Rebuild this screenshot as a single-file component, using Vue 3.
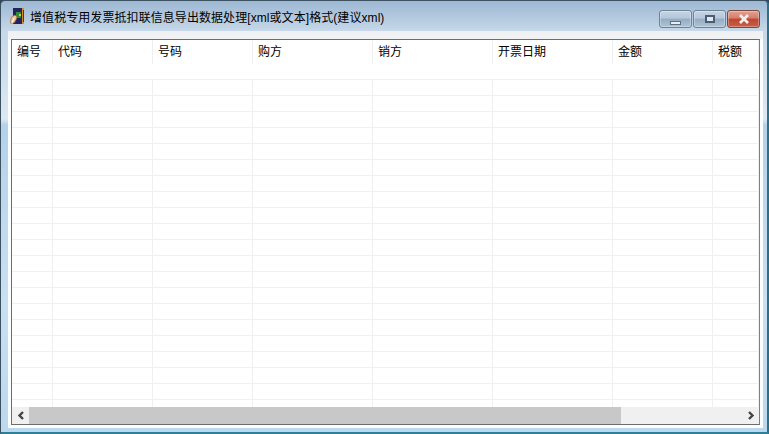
<script setup>
const columns = [
  { label: '编号', width: 41 },
  { label: '代码', width: 100 },
  { label: '号码', width: 100 },
  { label: '购方', width: 120 },
  { label: '销方', width: 120 },
  { label: '开票日期', width: 120 },
  { label: '金额', width: 100 },
  { label: '税额', width: 46 }
]
const rows = Array.from({ length: 21 }, (_, i) => i)
</script>

<template>
  <div class="window">
    <div class="titlebar">
      <svg class="app-icon" width="16" height="16" viewBox="0 0 16 16">
        <rect x="3" y="0" width="9" height="16" fill="#23235f" />
        <rect x="12" y="0" width="2" height="16" fill="#d98a2a" />
        <rect x="13" y="2" width="1" height="12" fill="#7a2418" />
        <rect x="6" y="4" width="5" height="6" fill="#2f8f35" />
        <rect x="9" y="6" width="2" height="2" fill="#d8c840" />
        <path d="M0 15 L1.5 9 L5 7 L7 9 L6 12 L4 15 Z" fill="#f0c898" stroke="#a86a3a" stroke-width="0.7" />
        <path d="M2 15 L4 10" stroke="#fff" stroke-width="1" fill="none" />
      </svg>
      <span class="title">增值税专用发票抵扣联信息导出数据处理[xml或文本]格式(建议xml)</span>
      <div class="controls">
        <button class="ctl"><span class="min-glyph"></span></button>
        <button class="ctl"><span class="max-glyph"></span></button>
        <button class="ctl close">
          <svg width="12" height="10" viewBox="0 0 12 10">
            <path d="M2 1 L10 9 M10 1 L2 9" stroke="#f4f0ee" stroke-width="2.6" fill="none" />
          </svg>
        </button>
      </div>
    </div>
    <div class="client">
      <div class="list">
        <div class="table">
          <div class="header">
            <div v-for="c in columns" :key="c.label" class="head-cell" :style="{ width: c.width + 'px' }">{{ c.label }}</div>
          </div>
          <div class="body">
            <div v-for="r in rows" :key="r" class="row">
              <div v-for="c in columns" :key="c.label" class="cell" :style="{ width: c.width + 'px' }"></div>
            </div>
          </div>
        </div>
        <div class="scrollbar">
          <div class="arrow">
            <svg width="8" height="9" viewBox="0 0 8 9"><path d="M6 1 L2.5 4.5 L6 8" stroke="#444" stroke-width="2.4" fill="none" /></svg>
          </div>
          <div class="track"><div class="thumb"></div></div>
          <div class="arrow">
            <svg width="8" height="9" viewBox="0 0 8 9"><path d="M2 1 L5.5 4.5 L2 8" stroke="#444" stroke-width="2.4" fill="none" /></svg>
          </div>
        </div>
      </div>
    </div>
  </div>
</template>

<style>
html, body { margin: 0; padding: 0; overflow: hidden; background: #2c4a5c; }
</style>

<style scoped>
.window {
  width: 769px;
  height: 434px;
  box-sizing: border-box;
  display: flex;
  flex-direction: column;
  padding: 0 4px 4px 7px;
  background: linear-gradient(#9db7d3 0, #c6d8e9 30px, #dce8f3 118px, #b4d1ea 124px, #c9e0f2 300px, #bcd8ee 100%);
  border: 1px solid #3d5260;
  border-right: 2px solid #2f6f86;
  border-bottom: 2px solid #2f7f96;
  border-radius: 5px 5px 0 0;
  font-family: "Liberation Sans", "Noto Sans CJK SC", sans-serif;
  color: #000;
}
.titlebar {
  height: 30px;
  flex: none;
  display: flex;
  align-items: center;
  padding-left: 3px;
  padding-right: 3px;
}
.app-icon { flex: none; margin-left: -1px; }
.title {
  margin-left: 4px;
  font-size: 12px;
  letter-spacing: .07px;
  color: #000;
  white-space: nowrap;
}
.controls {
  margin-left: auto;
  display: flex;
  align-self: flex-start;
  gap: 1px;
  padding-top: 9px;
}
.ctl {
  width: 33px;
  height: 18px;
  padding: 0;
  box-sizing: border-box;
  border: 1px solid #6f8397;
  border-radius: 3px;
  background: linear-gradient(#c6d5e4 0, #b4c6d9 45%, #94acc4 50%, #aec3d7 100%);
  display: flex;
  align-items: center;
  justify-content: center;
  box-shadow: inset 0 0 0 1px rgba(255, 255, 255, .3);
}
.ctl.close {
  background: linear-gradient(#e0a294 0, #d67c6a 45%, #bd4630 50%, #c95f48 100%);
  border-color: #7a4a40;
}
.min-glyph {
  box-sizing: border-box;
  width: 11px;
  height: 4px;
  margin-top: 7px;
  background: #e8eef4;
  border: 1px solid #5c6f83;
}
.max-glyph {
  box-sizing: border-box;
  width: 10px;
  height: 8px;
  background: #dfe8f0;
  border: 2px solid #4c5d70;
}
.client {
  flex: 1;
  min-height: 0;
  box-sizing: border-box;
  padding: 8px 3px 3px 3px;
  background: linear-gradient(#eef0f2, #f2f3f4 8px, #fbfdff 9px);
  display: flex;
}
.list {
  flex: 1;
  min-width: 0;
  box-sizing: border-box;
  border: 1px solid #6d6d6d;
  border-right-color: #808080;
  background: #fff;
  display: flex;
  flex-direction: column;
}
.table {
  flex: 1;
  min-height: 0;
  overflow: hidden;
}
.header {
  height: 39px;
  display: flex;
}
.head-cell {
  flex: none;
  box-sizing: border-box;
  height: 24px;
  padding: 4px 0 0 5px;
  border-right: 1px solid #eeeeee;
  font-size: 12px;
  line-height: 16px;
  color: #000;
  white-space: nowrap;
}
.body { display: flex; flex-direction: column; }
.row {
  height: 16px;
  flex: none;
  display: flex;
  box-sizing: border-box;
  border-top: 1px solid #f0f0f0;
}
.cell {
  flex: none;
  box-sizing: border-box;
  height: 100%;
  border-right: 1px solid #f0f0f0;
}
.scrollbar {
  height: 17px;
  flex: none;
  display: flex;
  background: #f0f0f0;
}
.arrow {
  width: 17px;
  flex: none;
  display: flex;
  align-items: center;
  justify-content: center;
}
.track { flex: 1; min-width: 0; }
.thumb {
  width: 592px;
  height: 100%;
  background: #c8c8c8;
}
</style>
